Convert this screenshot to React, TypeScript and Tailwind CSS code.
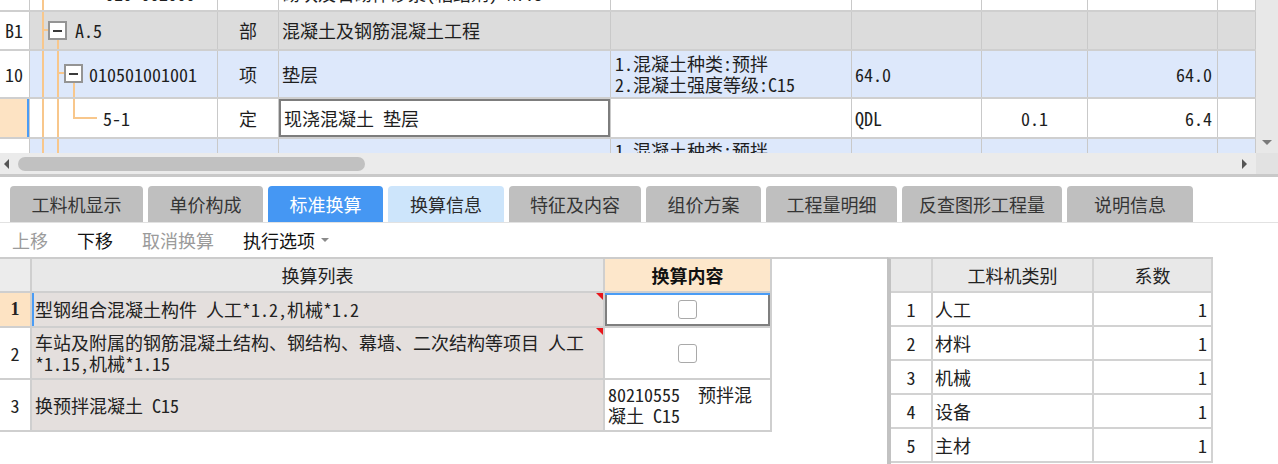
import React from "react";

const MONO = "font-['Noto_Sans_Mono_CJK_SC','Noto_Sans_CJK_SC',monospace]";
const COLS = "grid grid-cols-[30px_188px_61px_332px_241px_130px_106px_130px_38px]";

function C({ className = "", children }: { className?: string; children?: React.ReactNode }) {
  return (
    <div className={"relative flex items-center overflow-hidden border-r border-[#c9c9c9] " + className}>
      {children}
    </div>
  );
}

function VLine({ className = "" }: { className?: string }) {
  return <span className={"absolute w-[2px] bg-[#f8c78c] " + className} />;
}

function HLine({ className = "" }: { className?: string }) {
  return <span className={"absolute h-[2px] bg-[#f8c78c] " + className} />;
}

function MinusBox({ className = "" }: { className?: string }) {
  return (
    <span className={"absolute w-[19px] h-[19px] border-2 border-[#949494] bg-white flex items-center justify-center " + className}>
      <span className="w-[9px] h-[2px] bg-[#3a3a3a]" />
    </span>
  );
}

function TopGrid() {
  return (
    <div className={"h-[153px] overflow-hidden flex flex-col text-[18px] text-[#1e1e1e] " + MONO}>
      {/* partially hidden row */}
      <div className={COLS + " h-[40px] -mt-[28px] shrink-0 border-b-2 border-[#cfcfcf] bg-white"}>
        <C />
        <C className="items-end pb-[5px]">
          <VLine className="left-[12px] top-0 bottom-0" />
          <span className="absolute left-[75px] bottom-[3px] whitespace-pre">010-002000</span>
        </C>
        <C />
        <C className="items-end pb-[3px] pl-[3px]">
          <span className="whitespace-pre">砌块及石砌体砂浆(粘结剂) M7.5</span>
        </C>
        <C />
        <C />
        <C />
        <C />
        <C />
      </div>
      {/* B1 */}
      <div className={COLS + " h-[39px] shrink-0 border-b-2 border-[#cfcfcf]"}>
        <C className="bg-white pl-[5px]">B1</C>
        <C className="bg-[#dcdcdc]">
          <VLine className="left-[12px] top-0 bottom-0" />
          <HLine className="left-[12px] top-[17px] w-[7px]" />
          <MinusBox className="left-[18px] top-[9px]" />
          <VLine className="left-[27px] top-[28px] bottom-0" />
          <span className="absolute left-[45px]">A.5</span>
        </C>
        <C className="bg-[#dcdcdc] justify-center">部</C>
        <C className="bg-[#dcdcdc] pl-[3px]">混凝土及钢筋混凝土工程</C>
        <C className="bg-[#dcdcdc]" />
        <C className="bg-[#dcdcdc]" />
        <C className="bg-[#dcdcdc]" />
        <C className="bg-[#dcdcdc]" />
        <C className="bg-[#dcdcdc]" />
      </div>
      {/* 10 */}
      <div className={COLS + " h-[48px] shrink-0 border-b-2 border-[#cfcfcf]"}>
        <C className="bg-white pl-[5px]">10</C>
        <C className="bg-[#dde8fb]">
          <VLine className="left-[12px] top-0 bottom-0" />
          <VLine className="left-[27px] top-0 bottom-0" />
          <HLine className="left-[27px] top-[21px] w-[8px]" />
          <MinusBox className="left-[34px] top-[13px]" />
          <VLine className="left-[43px] top-[32px] bottom-0" />
          <span className="absolute left-[59px]">010501001001</span>
        </C>
        <C className="bg-[#dde8fb] justify-center">项</C>
        <C className="bg-[#dde8fb] pl-[3px]">垫层</C>
        <C className="bg-[#dde8fb] pl-[4px] leading-[21px]">
          <span>
            1.混凝土种类:预拌
            <br />
            2.混凝土强度等级:C15
          </span>
        </C>
        <C className="bg-[#dde8fb] pl-[3px]">64.0</C>
        <C className="bg-[#dde8fb]" />
        <C className="bg-[#dde8fb] justify-end pr-[5px]">64.0</C>
        <C className="bg-[#dde8fb]" />
      </div>
      {/* 5-1 */}
      <div className={COLS + " h-[40px] shrink-0 border-b-2 border-[#cfcfcf]"}>
        <C className="bg-[#fde3c3]">
          <span className="absolute right-0 top-0 bottom-0 w-[2px] bg-[#4a9cf5]" />
        </C>
        <C className="bg-white">
          <VLine className="left-[12px] top-0 bottom-0" />
          <VLine className="left-[27px] top-0 bottom-0" />
          <VLine className="left-[43px] top-0 h-[20px]" />
          <HLine className="left-[43px] top-[18px] w-[24px]" />
          <span className="absolute left-[73px]">5-1</span>
        </C>
        <C className="bg-white justify-center">定</C>
        <C className="bg-white pl-[5px]">
          <span className="absolute inset-0 border-2 border-[#7d7d7d]" />
          现浇混凝土 垫层
        </C>
        <C className="bg-white" />
        <C className="bg-white pl-[3px]">QDL</C>
        <C className="bg-white justify-center">0.1</C>
        <C className="bg-white justify-end pr-[5px]">6.4</C>
        <C className="bg-white" />
      </div>
      {/* next row, partial */}
      <div className={COLS + " h-[40px] shrink-0"}>
        <C className="bg-white" />
        <C className="bg-[#dde8fb]">
          <VLine className="left-[12px] top-0 bottom-0" />
          <VLine className="left-[27px] top-0 bottom-0" />
        </C>
        <C className="bg-[#dde8fb]" />
        <C className="bg-[#dde8fb]" />
        <C className="bg-[#dde8fb] items-start pl-[4px] pt-[1px] leading-[20px]">1.混凝土种类:预拌</C>
        <C className="bg-[#dde8fb]" />
        <C className="bg-[#dde8fb]" />
        <C className="bg-[#dde8fb]" />
        <C className="bg-[#dde8fb]" />
      </div>
    </div>
  );
}

const TABS: { label: string; w: string; kind: "grey" | "active" | "light" }[] = [
  { label: "工料机显示", w: "w-[133px]", kind: "grey" },
  { label: "单价构成", w: "w-[115px]", kind: "grey" },
  { label: "标准换算", w: "w-[115px]", kind: "active" },
  { label: "换算信息", w: "w-[116px]", kind: "light" },
  { label: "特征及内容", w: "w-[132px]", kind: "grey" },
  { label: "组价方案", w: "w-[115px]", kind: "grey" },
  { label: "工程量明细", w: "w-[131px]", kind: "grey" },
  { label: "反查图形工程量", w: "w-[160px]", kind: "grey" },
  { label: "说明信息", w: "w-[126px]", kind: "grey" },
];

function Tabs() {
  return (
    <div className="pt-[9px] border-b border-[#e2e2e2] flex gap-[5px] pl-[10px] font-['Noto_Sans_CJK_SC',sans-serif] text-[18px]">
      {TABS.map((t) => (
        <div
          key={t.label}
          className={
            "h-[36px] rounded-t-[4px] flex items-center justify-center " +
            t.w +
            " " +
            (t.kind === "active"
              ? "bg-[#4597f3] text-white"
              : t.kind === "light"
              ? "bg-[#cde5fb] text-[#2c2c2c]"
              : "bg-[#bfbfbf] text-[#353535]")
          }
        >
          {t.label}
        </div>
      ))}
    </div>
  );
}

function Toolbar() {
  return (
    <div className="h-[34px] flex items-center pl-[12px] gap-[29px] font-['Noto_Sans_CJK_SC',sans-serif] text-[18px]">
      <span className="text-[#9b9b9b]">上移</span>
      <span className="text-[#111]">下移</span>
      <span className="text-[#9b9b9b]">取消换算</span>
      <span className="text-[#111] flex items-center gap-[6px]">
        执行选项
        <span className="w-0 h-0 border-x-[4px] border-x-transparent border-t-[4px] border-t-[#8a8a8a]" />
      </span>
    </div>
  );
}

const LCOLS = "w-[772px] grid grid-cols-[32px_573px_167px]";

function Checkbox() {
  return <span className="w-[19px] h-[19px] rounded-[3px] border border-[#a9a9a9] bg-white" />;
}

function RedMark() {
  return (
    <span className="absolute top-0 right-0 w-0 h-0 border-t-[7px] border-t-[#e8161b] border-l-[7px] border-l-transparent" />
  );
}

function LeftTable() {
  const cell = "relative flex items-center border-r-2 border-[#cfcfcf] ";
  return (
    <div className={"w-[887px] h-full border-t-2 border-[#cccccc] text-[18px] text-[#222] " + MONO}>
      <div className={LCOLS + " h-[34px] border-b-2 border-[#cfcfcf]"}>
        <div className={cell + "bg-[#ececec]"} />
        <div className={cell + "bg-[#e8e8e8] justify-center"}>换算列表</div>
        <div className={cell + "bg-[#fde7cb] justify-center font-bold text-[#111]"}>换算内容</div>
      </div>
      <div className={LCOLS + " h-[35px] border-b-2 border-[#cfcfcf]"}>
        <div className={cell + "bg-[#fde3c3] justify-center font-['Liberation_Serif',serif] font-bold"}>1</div>
        <div className={cell + "bg-[#e4dfdd] pl-[3px]"}>
          <span className="absolute left-0 top-0 bottom-0 w-[2px] bg-[#4a9cf5]" />
          <RedMark />
          型钢组合混凝土构件 人工*1.2,机械*1.2
        </div>
        <div className={cell + "bg-white justify-center"}>
          <span className="absolute inset-0 border-2 border-[#7f7f7f]" />
          <span className="absolute left-0 right-0 top-0 h-[2px] bg-[#4a9cf5]" />
          <Checkbox />
        </div>
      </div>
      <div className={LCOLS + " h-[52px] border-b-2 border-[#cfcfcf]"}>
        <div className={cell + "bg-white justify-center"}>2</div>
        <div className={cell + "bg-[#e4dfdd] pl-[3px] leading-[21px]"}>
          <RedMark />
          <span>
            车站及附属的钢筋混凝土结构、钢结构、幕墙、二次结构等项目 人工
            <br />
            *1.15,机械*1.15
          </span>
        </div>
        <div className={cell + "bg-white justify-center"}>
          <Checkbox />
        </div>
      </div>
      <div className={LCOLS + " h-[52px] border-b-2 border-[#cfcfcf]"}>
        <div className={cell + "bg-white justify-center"}>3</div>
        <div className={cell + "bg-[#e4dfdd] pl-[3px]"}>换预拌混凝土 C15</div>
        <div className={cell + "bg-white pl-[3px] leading-[21px] whitespace-pre"}>
          <span>
            80210555  预拌混
            <br />
            凝土 C15
          </span>
        </div>
      </div>
    </div>
  );
}

const RCOLS = "grid grid-cols-[42px_161px_119px]";
const RROWS = ["人工", "材料", "机械", "设备", "主材"];

function RightTable() {
  const cell = "flex items-center border-r-2 border-[#d2d2d2] ";
  return (
    <div className={"w-[326px] h-full border-l-4 border-[#c2c2c2] border-t-2 border-t-[#cccccc] text-[18px] text-[#222] " + MONO}>
      <div className={RCOLS + " h-[34px] border-b-2 border-[#d2d2d2] bg-[#e8e8e8]"}>
        <div className={cell} />
        <div className={cell + "justify-center"}>工料机类别</div>
        <div className={cell + "justify-center"}>系数</div>
      </div>
      {RROWS.map((r, i) => (
        <div key={r} className={RCOLS + " h-[34px] border-b-2 border-[#d2d2d2] bg-white"}>
          <div className={cell + "justify-center"}>{i + 1}</div>
          <div className={cell + "pl-[2px]"}>{r}</div>
          <div className={cell + "justify-end pr-[4px]"}>1</div>
        </div>
      ))}
    </div>
  );
}

export default function App() {
  return (
    <div className="w-[1278px] h-[464px] overflow-hidden bg-white flex flex-col">
      <div className="flex">
        <div className="w-[1256px]">
          <TopGrid />
        </div>
        <div className="w-[22px] h-[153px] bg-[#e8e8e8] flex flex-col justify-end items-center pb-[8px]">
          <span className="w-0 h-0 border-x-[5px] border-x-transparent border-t-[5px] border-t-[#7a7a7a]" />
        </div>
      </div>
      <div className="h-[24px] bg-[#ebebeb] border-b-[3px] border-[#c9c9c9] flex items-center">
        <span className="ml-[4px] w-0 h-0 border-y-[5px] border-y-transparent border-r-[5px] border-r-[#555]" />
        <span className="ml-[9px] w-[347px] h-[14px] rounded-full bg-[#c1c1c1]" />
        <span className="flex-1" />
        <span className="mr-[9px] w-0 h-0 border-y-[5px] border-y-transparent border-l-[5px] border-l-[#555]" />
        <span className="w-[22px] h-full bg-[#e2e2e2]" />
      </div>
      <Tabs />
      <Toolbar />
      <div className="flex h-[207px]">
        <LeftTable />
        <RightTable />
      </div>
    </div>
  );
}
